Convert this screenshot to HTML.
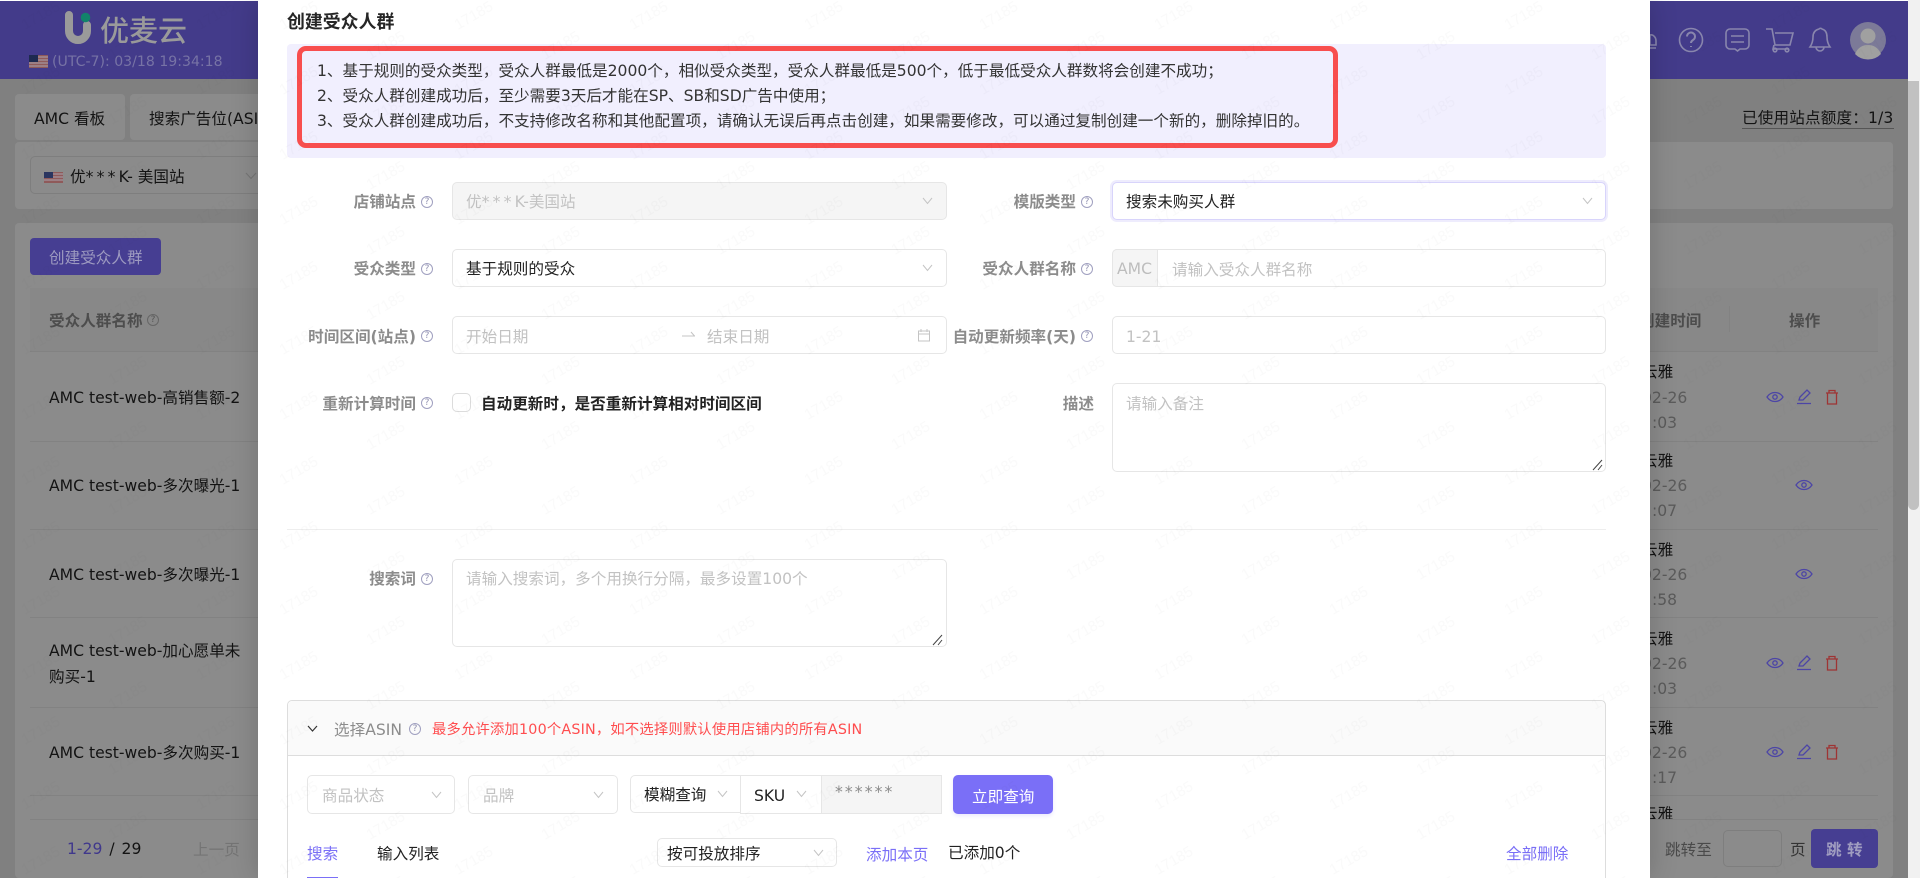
<!DOCTYPE html>
<html lang="zh-CN">
<head>
<meta charset="utf-8">
<title>创建受众人群</title>
<style>
html,body{margin:0;padding:0;width:1920px;height:878px;overflow:hidden;background:#808080}
body,input{font-family:"DejaVu Sans","Noto Sans CJK SC",sans-serif;font-size:15.6px;color:#131313}
.a{position:absolute}
.t{position:absolute;white-space:nowrap;line-height:20px;margin-top:1px}
.c{position:absolute;background:#8b8b8b;border-radius:4px}
.b{position:absolute;box-sizing:border-box;border:1px solid #e6e6e6;border-radius:5px;background:#fff}
.d{position:absolute;box-sizing:border-box;border:1px solid #7e7e7e;border-radius:5px}
.hr{position:absolute;left:30px;width:1848px;height:1px;background:#828282}
.l{position:absolute;white-space:nowrap;line-height:20px;margin-top:1px;text-align:right;width:200px;color:#8c8c8c;font-weight:700}
.h{position:absolute;box-sizing:border-box;width:12px;height:12px;border:1px solid #a0a0c0;border-radius:50%;font-size:9px;line-height:10px;text-align:center;color:#9090b0;font-weight:400}
.p{color:#c2c2c2}
.s{color:#5b5b5b}
.k{color:#7a6ff7}
.st{letter-spacing:3.2px}
svg{position:absolute;overflow:visible}
</style>
</head>
<body>

<!-- dimmed background page -->
<div class="a" style="left:0;top:1px;width:1908px;height:78px;background:#433b8a"></div>
<div class="a" style="left:0;top:0;width:1908px;height:1px;background:#fff"></div>
<svg style="left:0;top:0" width="120" height="60">
  <path d="M69 15V31a9 9 0 0 0 18 0V25" fill="none" stroke="#9a9a9a" stroke-width="8" stroke-linecap="round"/>
  <circle cx="85.5" cy="17.5" r="4.8" fill="#12836a"/>
</svg>
<div class="t" style="left:100px;top:14px;font-size:29px;line-height:32px;color:#9a9a9a;font-weight:500">优麦云</div>
<svg style="left:29px;top:55px" width="19" height="13">
  <rect width="19" height="13" fill="#8f5a5a"/>
  <path d="M0 2H19M0 5H19M0 8H19M0 11H19" stroke="#a9a4b0" stroke-width="1"/>
  <rect width="9" height="7" fill="#1e2a50"/>
</svg>
<div class="t" style="left:52px;top:51px;font-size:14.1px;color:#7773a5">(UTC-7): 03/18 19:34:18</div>

<svg style="left:1640px;top:0" width="260" height="70" fill="none" stroke="#8986ad" stroke-width="1.6">
  <path d="M10 35a5 6 0 0 1 6 6v4h-6z M10 48h6"/>
  <circle cx="51" cy="40" r="11.5"/>
  <path d="M47 36.5a4 4 0 1 1 6 3.5c-1.5 1-2 1.5-2 3M51 46v1" stroke-width="2"/>
  <path d="M90 29h15a4 4 0 0 1 4 4v12a4 4 0 0 1-4 4h-5l-2.500 2-2.500-2h-5a4 4 0 0 1-4-4V33a4 4 0 0 1 4-4zM91 36h13M91 42h13"/>
  <path d="M126 29h6l3 16h15l3-12h-18M134 45l-1 4h16"/><circle cx="135" cy="50" r="1.800"/><circle cx="147" cy="50" r="1.800"/>
  <path d="M179 29a2 2 0 0 1 3 0c4 1 5 4 5 8 0 4 1 7 3 10h-20c2-3 3-6 3-10 0-4 2-7 6-8zM176 47a4 4 0 0 0 8 0"/>
</svg>
<svg style="left:1850px;top:22px" width="36" height="36">
  <circle cx="18" cy="18" r="18" fill="#7c7a98"/>
  <circle cx="18" cy="14" r="7.500" fill="#a0a0a0"/>
  <path d="M5 32c3-7 8-9 13-9s10 2 13 9a18 18 0 0 1-26 0z" fill="#a0a0a0"/>
</svg>

<div class="c" style="left:15px;top:94px;width:110px;height:46px"></div>
<div class="t" style="left:34px;top:108px">AMC 看板</div>
<div class="c" style="left:130px;top:94px;width:200px;height:46px"></div>
<div class="t" style="left:149px;top:108px">搜索广告位(ASIN)</div>
<div class="c" style="left:15px;top:142px;width:1878px;height:67px"></div>
<div class="d" style="left:30px;top:156px;width:240px;height:38px"></div>
<svg style="left:44px;top:172px" width="19" height="11">
  <rect width="19" height="11" fill="#8f5a5a"/>
  <path d="M0 2H19M0 5H19M0 8H19" stroke="#a9a4b0" stroke-width="1"/>
  <rect width="9" height="6" fill="#2a3560"/>
</svg>
<div class="t" style="left:70px;top:166px">优<span class="st">***</span>K- 美国站</div>
<svg style="left:245px;top:172px" width="12" height="8"><path d="M1 1l5 5.500 5-5.500" fill="none" stroke="#757575"/></svg>
<div class="t" style="left:1742px;top:107px;border-bottom:1px solid #555;letter-spacing:.15px">已使用站点额度：1/3</div>

<div class="c" style="left:15px;top:223px;width:1878px;height:655px"></div>
<div class="a" style="left:30px;top:238px;width:131px;height:37px;background:#463e92;border-radius:4px"></div>
<div class="t" style="left:49px;top:247px;color:#9d9ac0">创建受众人群</div>

<div class="a" style="left:30px;top:288px;width:1848px;height:63px;background:#888888"></div>
<div class="t" style="left:49px;top:310px;color:#4d4d4d;font-weight:700">受众人群名称</div>
<div class="h" style="left:147px;top:314px;border-color:#666;color:#555">?</div>
<div class="t" style="left:1639px;top:310px;color:#4d4d4d;font-weight:700">创建时间</div>
<div class="a" style="left:1729px;top:306px;width:1px;height:26px;background:#828282"></div>
<div class="t" style="left:1789px;top:310px;color:#4d4d4d;font-weight:700">操作</div>

<div class="hr" style="top:351px"></div>
<div class="hr" style="top:441px"></div>
<div class="hr" style="top:529px"></div>
<div class="hr" style="top:617px"></div>
<div class="hr" style="top:707px"></div>
<div class="hr" style="top:795px"></div>
<div class="hr" style="top:819px"></div>

<div class="t" style="left:49px;top:387px">AMC test-web-高销售额-2</div>
<div class="t" style="left:49px;top:475px">AMC test-web-多次曝光-1</div>
<div class="t" style="left:49px;top:564px">AMC test-web-多次曝光-1</div>
<div class="t" style="left:49px;top:640px">AMC test-web-加心愿单未</div>
<div class="t" style="left:49px;top:666px">购买-1</div>
<div class="t" style="left:49px;top:742px">AMC test-web-多次购买-1</div>

<div class="t" style="left:1642px;top:361px">云雅</div><div class="t s" style="left:1642px;top:387px">02-26</div><div class="t s" style="left:1652px;top:412px">:03</div>
<div class="t" style="left:1642px;top:450px">云雅</div><div class="t s" style="left:1642px;top:475px">02-26</div><div class="t s" style="left:1652px;top:500px">:07</div>
<div class="t" style="left:1642px;top:539px">云雅</div><div class="t s" style="left:1642px;top:564px">02-26</div><div class="t s" style="left:1652px;top:589px">:58</div>
<div class="t" style="left:1642px;top:628px">云雅</div><div class="t s" style="left:1642px;top:653px">02-26</div><div class="t s" style="left:1652px;top:678px">:03</div>
<div class="t" style="left:1642px;top:717px">云雅</div><div class="t s" style="left:1642px;top:742px">02-26</div><div class="t s" style="left:1652px;top:767px">:17</div>
<div class="a" style="left:1642px;top:795px;width:40px;height:24px;overflow:hidden"><div class="t" style="left:0;top:8px">云雅</div></div>

<svg style="left:0;top:0" width="1908" height="878" fill="none" stroke-width="1.300">
  <g stroke="#4c45a6">
    <g id="e1"><path d="M1767 397c4-6 12-6 16 0-4 6-12 6-16 0z"/><circle cx="1775" cy="397" r="2.200"/></g>
    <path d="M1796 485c4-6 12-6 16 0-4 6-12 6-16 0z"/><circle cx="1804" cy="485" r="2.200"/>
    <path d="M1796 574c4-6 12-6 16 0-4 6-12 6-16 0z"/><circle cx="1804" cy="574" r="2.200"/>
    <path d="M1767 663c4-6 12-6 16 0-4 6-12 6-16 0z"/><circle cx="1775" cy="663" r="2.200"/>
    <path d="M1767 752c4-6 12-6 16 0-4 6-12 6-16 0z"/><circle cx="1775" cy="752" r="2.200"/>
    <path d="M1799 400l1-3 7-7 3 3-7 7zM1797 403.500h14"/>
    <path d="M1799 666l1-3 7-7 3 3-7 7zM1797 669.500h14"/>
    <path d="M1799 755l1-3 7-7 3 3-7 7zM1797 758.500h14"/>
  </g>
  <g stroke="#9e3434">
    <path d="M1826 393h12M1829 393v-2.500h6v2.500M1827.500 393v11h9v-11"/>
    <path d="M1826 659h12M1829 659v-2.500h6v2.500M1827.500 659v11h9v-11"/>
    <path d="M1826 748h12M1829 748v-2.500h6v2.500M1827.500 748v11h9v-11"/>
  </g>
</svg>

<div class="t" style="left:67px;top:838px;word-spacing:2px"><span style="color:#40388c">1-29</span> / 29</div>
<div class="t" style="left:193px;top:839px;color:#747474">上一页</div>
<div class="t" style="left:1665px;top:839px;color:#4a4a4a">跳转至</div>
<div class="d" style="left:1723px;top:830px;width:59px;height:37px"></div>
<div class="t" style="left:1790px;top:839px;color:#333">页</div>
<div class="a" style="left:1811px;top:829px;width:67px;height:39px;background:#463e92;border-radius:4px"></div>
<div class="t" style="left:1826px;top:839px;color:#a09dc0;font-weight:700">跳 转</div>

<svg style="left:0;top:0" width="1908" height="878">
  <defs>
    <pattern id="w1" width="175" height="130" patternUnits="userSpaceOnUse">
      <g font-size="15" fill="#000" opacity=".014" font-family="Liberation Sans">
        <text transform="translate(25 30) rotate(-30)">17185</text>
        <text transform="translate(25 95) rotate(-30)">17185</text>
        <text transform="translate(112 60) rotate(-30)">17185</text>
        <text transform="translate(112 125) rotate(-30)">17185</text>
      </g>
    </pattern>
  </defs>
  <rect width="1908" height="878" fill="url(#w1)"/>
</svg>

<!-- scrollbar -->
<div class="a" style="left:1908px;top:0;width:12px;height:878px;background:#f1f1f1"></div>
<div class="a" style="left:1908px;top:81px;width:11px;height:429px;background:#c1c1c1;border-radius:0 0 6px 6px"></div>

<!-- modal -->
<div class="a" style="left:258px;top:0;width:1392px;height:878px;box-shadow:0 0 26px rgba(0,0,0,.18)"></div>
<div class="a" style="left:258px;top:0;width:1392px;height:878px;overflow:hidden;background:#fff">
<div class="a" style="left:-258px;top:0;width:1920px;height:878px">

<div class="t" style="left:287px;top:12px;font-size:17.9px;font-weight:700;color:#262626">创建受众人群</div>

<div class="a" style="left:287px;top:44px;width:1319px;height:114px;background:#f1effe;border-radius:4px"></div>
<div class="a" style="left:297px;top:46px;width:1041px;height:102px;box-sizing:border-box;border:5px solid #f84e4e;border-radius:9px"></div>
<div class="t" style="left:317px;top:60px;color:#333">1、基于规则的受众类型，受众人群最低是2000个，相似受众类型，受众人群最低是500个，低于最低受众人群数将会创建不成功；</div>
<div class="t" style="left:317px;top:85px;color:#333">2、受众人群创建成功后，至少需要3天后才能在SP、SB和SD广告中使用；</div>
<div class="t" style="left:317px;top:110px;color:#333">3、受众人群创建成功后，不支持修改名称和其他配置项，请确认无误后再点击创建，如果需要修改，可以通过复制创建一个新的，删除掉旧的。</div>

<!-- row 1 -->
<div class="l" style="left:216px;top:191px">店铺站点</div><div class="h" style="left:421px;top:196px">?</div>
<div class="b" style="left:452px;top:182px;width:495px;height:38px;background:#f5f5f5"></div>
<div class="t p" style="left:466px;top:191px">优<span class="st">***</span>K-美国站</div>
<svg style="left:922px;top:197px" width="11" height="8"><path d="M1 1l4.500 5.500L10 1" fill="none" stroke="#c4c4c4"/></svg>

<div class="l" style="left:876px;top:191px">模版类型</div><div class="h" style="left:1081px;top:196px">?</div>
<div class="b" style="left:1112px;top:182px;width:494px;height:38px;border-color:#d8d4fb;box-shadow:0 0 0 2px #eeecfd"></div>
<div class="t" style="left:1126px;top:191px;color:#222">搜索未购买人群</div>
<svg style="left:1582px;top:197px" width="11" height="8"><path d="M1 1l4.500 5.500L10 1" fill="none" stroke="#c4c4c4"/></svg>

<!-- row 2 -->
<div class="l" style="left:216px;top:258px">受众类型</div><div class="h" style="left:421px;top:263px">?</div>
<div class="b" style="left:452px;top:249px;width:495px;height:38px"></div>
<div class="t" style="left:466px;top:258px;color:#222">基于规则的受众</div>
<svg style="left:922px;top:264px" width="11" height="8"><path d="M1 1l4.500 5.500L10 1" fill="none" stroke="#c4c4c4"/></svg>

<div class="l" style="left:876px;top:258px">受众人群名称</div><div class="h" style="left:1081px;top:263px">?</div>
<div class="b" style="left:1112px;top:249px;width:494px;height:38px"></div>
<div class="b" style="left:1112px;top:249px;width:46px;height:38px;background:#f5f5f5;border-radius:5px 0 0 5px"></div>
<div class="t" style="left:1117px;top:258px;color:#bdbdbd;font-size:15.6px">AMC</div>
<div class="t p" style="left:1172px;top:259px">请输入受众人群名称</div>

<!-- row 3 -->
<div class="l" style="left:216px;top:326px">时间区间(站点)</div><div class="h" style="left:421px;top:330px">?</div>
<div class="b" style="left:452px;top:316px;width:495px;height:38px"></div>
<div class="t p" style="left:466px;top:326px">开始日期</div>
<svg style="left:682px;top:330px" width="14" height="10"><path d="M0 6h13M9 2l3.500 4" fill="none" stroke="#c4c4c4"/></svg>
<div class="t p" style="left:707px;top:326px">结束日期</div>
<svg style="left:917px;top:328px" width="14" height="14" fill="none" stroke="#c4c4c4"><path d="M1.500 3h11v10h-11zM1.500 6h11M4 1v3M10 1v3"/></svg>

<div class="l" style="left:876px;top:326px">自动更新频率(天)</div><div class="h" style="left:1081px;top:330px">?</div>
<div class="b" style="left:1112px;top:316px;width:494px;height:38px"></div>
<div class="t p" style="left:1126px;top:326px">1-21</div>

<!-- row 4 -->
<div class="l" style="left:216px;top:393px">重新计算时间</div><div class="h" style="left:421px;top:397px">?</div>
<div class="b" style="left:452px;top:393px;width:19px;height:19px;border-color:#dcdcdc"></div>
<div class="t" style="left:481px;top:393px;color:#222;font-weight:700">自动更新时，是否重新计算相对时间区间</div>

<div class="l" style="left:894px;top:393px">描述</div>
<div class="b" style="left:1112px;top:383px;width:494px;height:89px"></div>
<div class="t p" style="left:1126px;top:393px">请输入备注</div>
<svg style="left:1592px;top:459px" width="12" height="12"><path d="M1 11L10 1M6 11l4-5" stroke="#444" fill="none"/></svg>

<div class="a" style="left:287px;top:529px;width:1319px;height:1px;background:#eeeeee"></div>

<!-- row 5 -->
<div class="l" style="left:216px;top:568px">搜索词</div><div class="h" style="left:421px;top:573px">?</div>
<div class="b" style="left:452px;top:559px;width:495px;height:88px"></div>
<div class="t p" style="left:466px;top:568px">请输入搜索词，多个用换行分隔，最多设置100个</div>
<svg style="left:932px;top:634px" width="12" height="12"><path d="M1 11L10 1M6 11l4-5" stroke="#444" fill="none"/></svg>

<!-- ASIN panel -->
<div class="a" style="left:287px;top:700px;width:1319px;height:200px;box-sizing:border-box;border:1px solid #dddddd;border-radius:5px"></div>
<div class="a" style="left:288px;top:701px;width:1317px;height:54px;background:#fafafa;border-bottom:1px solid #dddddd;border-radius:5px 5px 0 0"></div>
<svg style="left:307px;top:725px" width="11" height="8"><path d="M1 1l4.500 5 4.500-5" fill="none" stroke="#333" stroke-width="1.200"/></svg>
<div class="t" style="left:334px;top:719px;color:#8c8c8c">选择ASIN</div>
<div class="h" style="left:409px;top:723px">?</div>
<div class="t" style="left:432px;top:719px;color:#ff4d4f;font-size:14.3px;letter-spacing:.2px">最多允许添加100个ASIN，如不选择则默认使用店铺内的所有ASIN</div>

<div class="b" style="left:307px;top:775px;width:148px;height:39px"></div>
<div class="t p" style="left:322px;top:785px">商品状态</div>
<svg style="left:431px;top:791px" width="11" height="8"><path d="M1 1l4.500 5.500L10 1" fill="none" stroke="#c4c4c4"/></svg>
<div class="b" style="left:468px;top:775px;width:150px;height:39px"></div>
<div class="t p" style="left:483px;top:785px">品牌</div>
<svg style="left:593px;top:791px" width="11" height="8"><path d="M1 1l4.500 5.500L10 1" fill="none" stroke="#c4c4c4"/></svg>
<div class="b" style="left:630px;top:775px;width:111px;height:38px;border-radius:5px 0 0 5px"></div>
<div class="t" style="left:644px;top:784px;color:#222">模糊查询</div>
<svg style="left:717px;top:790px" width="11" height="8"><path d="M1 1l4.500 5.500L10 1" fill="none" stroke="#c4c4c4"/></svg>
<div class="b" style="left:740px;top:775px;width:82px;height:39px;border-radius:0"></div>
<div class="t" style="left:754px;top:785px;color:#222">SKU</div>
<svg style="left:796px;top:790px" width="11" height="8"><path d="M1 1l4.500 5.500L10 1" fill="none" stroke="#c4c4c4"/></svg>
<div class="b" style="left:821px;top:775px;width:121px;height:39px;border-radius:0;background:#f5f5f5"></div>
<div class="t" style="left:835px;top:781px;color:#8a8a8a;letter-spacing:2.1px">******</div>
<div class="a" style="left:953px;top:775px;width:100px;height:39px;background:#7a6ff7;border-radius:5px;box-shadow:0 2px 4px #ebe9fd"></div>
<div class="t" style="left:972px;top:786px;color:#fff">立即查询</div>

<div class="t k" style="left:307px;top:843px">搜索</div>
<div class="a" style="left:307px;top:877px;width:31px;height:1px;background:#7a6ff7"></div>
<div class="t" style="left:377px;top:843px;color:#222">输入列表</div>
<div class="b" style="left:657px;top:838px;width:180px;height:29px"></div>
<div class="t" style="left:667px;top:843px;color:#222">按可投放排序</div>
<svg style="left:813px;top:849px" width="11" height="8"><path d="M1 1l4.500 5.500L10 1" fill="none" stroke="#c4c4c4"/></svg>
<div class="t k" style="left:866px;top:844px">添加本页</div>
<div class="t" style="left:948px;top:842px;color:#222">已添加0个</div>
<div class="t k" style="left:1506px;top:843px">全部删除</div>

<svg style="left:258px;top:0" width="1392" height="878">
  <defs>
    <pattern id="w2" width="175" height="130" patternUnits="userSpaceOnUse">
      <g font-size="15" fill="#000" opacity=".02" font-family="Liberation Sans">
        <text transform="translate(25 30) rotate(-30)">17185</text>
        <text transform="translate(25 95) rotate(-30)">17185</text>
        <text transform="translate(112 60) rotate(-30)">17185</text>
        <text transform="translate(112 125) rotate(-30)">17185</text>
      </g>
    </pattern>
  </defs>
  <rect width="1392" height="878" fill="url(#w2)"/>
</svg>
</div>
</div>
</body>
</html>
